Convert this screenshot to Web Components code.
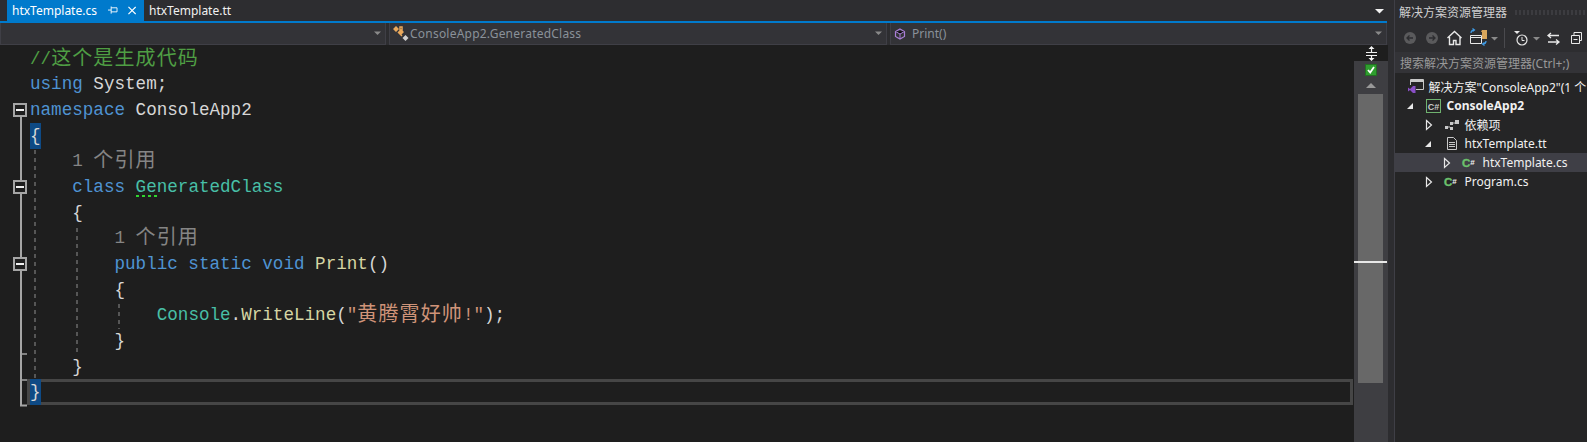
<!DOCTYPE html>
<html>
<head>
<meta charset="utf-8">
<style>
html, body { margin: 0; height: 100%; overflow: hidden; background: #2d2d30; }
body { display: flex; width: 1587px; height: 442px; font: 12px "Noto Sans", "Noto Sans CJK SC", sans-serif; }
</style>
</head>
<body>
<ide-main>
  <doc-tabs>
    <doc-tab active>htxTemplate.cs</doc-tab>
    <doc-tab>htxTemplate.tt</doc-tab>
  </doc-tabs>
  <nav-bar>
    <nav-drop></nav-drop>
    <nav-drop icon="types">ConsoleApp2.GeneratedClass</nav-drop>
    <nav-drop icon="method">Print()</nav-drop>
  </nav-bar>
  <code-editor>
    <code-line><code-tok k="com">//</code-tok><code-tok k="com" cjk>这个是生成代码</code-tok></code-line>
    <code-line><code-tok k="kw">using</code-tok> System;</code-line>
    <code-line><code-tok k="kw">namespace</code-tok> ConsoleApp2</code-line>
    <code-line><code-tok k="match">{</code-tok></code-line>
    <code-line>    <code-tok k="lens">1 </code-tok><code-tok k="lens" cjk>个引用</code-tok></code-line>
    <code-line>    <code-tok k="kw">class</code-tok> <code-tok k="type" squiggle>Ge</code-tok><code-tok k="type">neratedClass</code-tok></code-line>
    <code-line>    {</code-line>
    <code-line>        <code-tok k="lens">1 </code-tok><code-tok k="lens" cjk>个引用</code-tok></code-line>
    <code-line>        <code-tok k="kw">public static void</code-tok> <code-tok k="fn">Print</code-tok>()</code-line>
    <code-line>        {</code-line>
    <code-line>            <code-tok k="type">Console</code-tok>.<code-tok k="fn">WriteLine</code-tok>(<code-tok k="str">"</code-tok><code-tok k="str" cjk>黄腾霄好帅</code-tok><code-tok k="str">!"</code-tok>);</code-line>
    <code-line>        }</code-line>
    <code-line>    }</code-line>
    <code-line current><code-tok k="match">}</code-tok></code-line>
  </code-editor>
</ide-main>
<solution-explorer>
  <tree-row level="0" icon="solution">解决方案"ConsoleApp2"(1 个</tree-row>
  <tree-row level="1" icon="csproj" exp="open" bold>ConsoleApp2</tree-row>
  <tree-row level="2" icon="deps" exp="closed">依赖项</tree-row>
  <tree-row level="2" icon="doc" exp="open">htxTemplate.tt</tree-row>
  <tree-row level="3" icon="csfile" exp="closed" selected>htxTemplate.cs</tree-row>
  <tree-row level="2" icon="csfile" exp="closed">Program.cs</tree-row>
</solution-explorer>

<script>
const treeIcons = {
  solution: `<svg width="18" height="17" viewBox="0 0 18 17"><path d="M3.500 7V1.500h13v10H9" fill="#252526" stroke="#c8c8c8"/><path d="M3.500 3h13" stroke="#c8c8c8" stroke-width="2"/><path d="M1 9.500l2 1.500 3-3h2.500v7H6l-3-3-2 1.500z" fill="#8a4fc7"/></svg>`,
  csproj: `<svg width="16" height="14" viewBox="0 0 16 14"><rect x=".5" y=".5" width="14" height="13" fill="none" stroke="#6fb26f"/><text x="7.500" y="10.500" text-anchor="middle" font-family="Liberation Sans" font-weight="700" font-size="9" fill="#c8c8c8">C#</text></svg>`,
  deps: `<svg width="16" height="12" viewBox="0 0 16 12"><g fill="#c8c8c8"><rect x="1" y="7" width="3" height="3"/><rect x="6" y="3" width="3" height="3"/><rect x="6" y="8" width="3" height="3"/><rect x="11" y="1" width="4" height="4"/></g><path d="M4 8h2M9 4h2" stroke="#c8c8c8"/></svg>`,
  doc: `<svg width="12" height="15" viewBox="0 0 12 15"><path d="M1.500 1.500h6l3 3v9h-9z" fill="none" stroke="#c8c8c8"/><path d="M3 6.500h6M3 8.500h6M3 10.500h6" stroke="#c8c8c8"/></svg>`,
  csfile: `<svg width="18" height="12" viewBox="0 0 18 12"><text x="1" y="10" font-family="Liberation Sans" font-weight="700" font-size="11.500" fill="#6cc06c" stroke="#6cc06c" stroke-width=".4">C</text><text x="9.300" y="7.500" font-family="Liberation Sans" font-weight="700" font-size="8" fill="#f1f1f1">#</text></svg>`
};

const navIcons = {
  types: `<svg width="16" height="15" viewBox="0 0 16 15"><path d="M3 0l3 3-3 3-3-3zM8 3l3 3-3 3-3-3z" fill="#eaa95c"/><path d="M7 1h2v3H7zM5 6l4 4" stroke="#eaa95c" stroke-width="1.500"/><path d="M12.500 9l3 3-3 3-3-3z" fill="#d0d0d0"/></svg>`,
  method: `<svg width="12" height="12" viewBox="0 0 12 12"><path d="M6 1l4.500 2.500v5L6 11 1.500 8.500v-5z" fill="none" stroke="#a97fd6" stroke-width="1.200"/><path d="M1.500 3.500L6 6l4.500-2.500M6 6v5" stroke="#a97fd6"/></svg>`
};

class IdeMain extends HTMLElement {
  constructor() {
    super();
    this.attachShadow({ mode: "open" });
    this.shadowRoot.innerHTML = `<style>
      :host { display: flex; flex-direction: column; width: 1394px; height: 442px; box-sizing: border-box; background: #2d2d30; }
    </style><slot></slot>`;
  }
}

class DocTabs extends HTMLElement {
  constructor() {
    super();
    this.attachShadow({ mode: "open" });
    this.shadowRoot.innerHTML = `<style>
      :host { display: flex; height: 23px; box-sizing: border-box; padding-left: 7px; margin-right: 7px; border-bottom: 2px solid #007acc; flex: none; }
      .spacer { flex: 1; }
      svg { align-self: center; margin-right: 2px; }
    </style><slot></slot><div class="spacer"></div>
    <svg width="10" height="6" viewBox="0 0 10 6"><path d="M0 1h9L4.500 5.500z" fill="#f1f1f1"/></svg>`;
  }
}

class DocTab extends HTMLElement {
  constructor() {
    super();
    this.attachShadow({ mode: "open" });
    const controls = this.hasAttribute("active") ? `
      <svg width="11" height="9" viewBox="0 0 11 9"><path d="M3.500 0v8M0 4h3.500M3.500 1.500h6.500v4.500H3.500" fill="none" stroke="#fff"/></svg>
      <svg width="9" height="9" viewBox="0 0 9 9"><path d="M.5.500l8 8M8.500.500l-8 8" stroke="#fff" stroke-width="1.300"/></svg>` : "";
    this.shadowRoot.innerHTML = `<style>
      :host { display: flex; align-items: center; height: 21px; box-sizing: border-box; padding: 0 8px 1px 5px; color: #f1f1f1; font-size: 12px; }
      :host([active]) { background: #007acc; width: 137px; color: #fff; padding-left: 5px; }
      svg:first-of-type { margin-left: 11px; }
      svg + svg { margin-left: 10px; }
    </style><slot></slot>${controls}`;
  }
}

class NavBar extends HTMLElement {
  constructor() {
    super();
    this.attachShadow({ mode: "open" });
    this.shadowRoot.innerHTML = `<style>
      :host { display: grid; grid-template-columns: 386px 498px 1fr; column-gap: 3px; height: 22px; margin-right: 7px; flex: none; }
    </style><slot></slot>`;
  }
}

class NavDrop extends HTMLElement {
  constructor() {
    super();
    this.attachShadow({ mode: "open" });
    const icon = navIcons[this.getAttribute("icon")] || "";
    this.shadowRoot.innerHTML = `<style>
      :host { display: flex; align-items: center; box-sizing: border-box; height: 22px; background: #333337; border: 1px solid #3f3f46; border-top: 0; padding: 0 3px 0 3px; color: #8a9199; font-size: 12px; }
      :host([icon=types]) .label { padding-left: 1px; letter-spacing: .22px; }
      :host([icon=method]) .label { padding-left: 6px; }
      .label { flex: 1; white-space: nowrap; }
      svg.arrow { flex: none; }
    </style>${icon}<div class="label"><slot></slot></div>
    <svg class="arrow" width="8" height="5" viewBox="0 0 8 5"><path d="M0 .500h7L3.500 4z" fill="#8a8a8a"/></svg>`;
  }
}

class CodeEditor extends HTMLElement {
  constructor() {
    super();
    this.attachShadow({ mode: "open" });
    const lh = 25.7, top = 45.5;
    const mid = (i) => top + lh * i + lh / 2;
    const bottom = (i) => top + lh * (i + 1);
    const foldBox = (i) => {
      const y = Math.round(mid(i));
      return `<rect x="14" y="${y - 6}" width="12" height="12" fill="#1e1e1e" stroke="#a5a5a5" stroke-width="2"/><path d="M16 ${y}h8" stroke="#f0f0f0" stroke-width="2"/>`;
    };
    const tick = (y) => `<path d="M21 ${Math.round(y)}h6" stroke="#a5a5a5" stroke-width="1.500"/>`;
    this.shadowRoot.innerHTML = `<style>
      :host { display: flex; flex: 1; min-height: 0; background: #1e1e1e; margin-right: 6px; font: 17.6px "Liberation Mono", "Noto Sans CJK SC", monospace; color: #d6d6d6; }
      .code { position: relative; flex: 1; min-width: 0; padding-top: .5px; }
      .margin { position: absolute; left: 0; top: 0; pointer-events: none; }
      .bar { flex: none; width: 34px; background: #3e3e42; position: relative; display: flex; flex-direction: column; align-items: center; }
      .split { align-self: stretch; height: 16px; background: #1e1e1e; display: flex; justify-content: center; align-items: center; padding-top: 1px; box-sizing: border-box; }
      .check { margin-top: 3px; width: 12px; height: 12px; display: block; }
      .up { margin-top: 7px; display: block; }
      .thumb { margin-top: 6px; width: 25px; height: 289px; background: #686868; margin-left: -1px; }
      .caret { position: absolute; left: 0; right: 1px; top: 216px; height: 2px; background: #e8e8e8; }
    </style>
    <div class="code">
      <svg class="margin" width="130" height="397" viewBox="0 45 130 397">
        <path d="M21 ${mid(2)}V405.500h6" fill="none" stroke="#a5a5a5" stroke-width="2"/>
        ${tick(bottom(11))}${tick(bottom(12))}
        ${foldBox(2)}${foldBox(5)}${foldBox(8)}
        <g stroke="#757575" stroke-dasharray="4 4" stroke-width="1.300">
          <path d="M35 150V380"/><path d="M77 228V354"/><path d="M119 304V329"/>
        </g>
      </svg>
      <slot></slot>
    </div>
    <div class="bar">
      <div class="split"><svg width="13" height="15" viewBox="0 0 13 15"><path d="M1 6.500h11M1 9.500h11M6.500 2v4M6.500 10v4" stroke="#f1f1f1" stroke-width="1.200"/><path d="M3.500 3h6L6.500 0zM3.500 12h6l-3 3z" fill="#f1f1f1"/></svg></div>
      <svg class="check" viewBox="0 0 12 12"><rect x=".5" y=".5" width="11" height="11" fill="#2f9e2f" stroke="#226f22"/><path d="M3 6l2.200 2.500L9 3" fill="none" stroke="#fff" stroke-width="1.800"/></svg>
      <svg class="up" width="10" height="5" viewBox="0 0 10 5"><path d="M0 5h10L5 0z" fill="#999"/></svg>
      <div class="thumb"></div>
      <div class="caret"></div>
    </div>`;
  }
}

class CodeLine extends HTMLElement {
  constructor() {
    super();
    this.attachShadow({ mode: "open" });
    this.shadowRoot.innerHTML = `<style>
      :host { display: block; height: 25.7px; line-height: 27px; padding-left: 30px; position: relative; white-space: pre; }
      :host([current]) { box-sizing: border-box; margin: 0 1px 0 27px; padding-left: 0; border: 3px solid #464646; line-height: 21px; }
    </style><slot></slot>`;
  }
}

class CodeTok extends HTMLElement {
  constructor() {
    super();
    this.attachShadow({ mode: "open" });
    this.shadowRoot.innerHTML = `<style>
      :host([k=kw]) { color: #4f93d2; }
      :host([k=com]) { color: #4f9e44; }
      :host([k=type]) { color: #48bfa6; }
      :host([k=fn]) { color: #d6d6a4; }
      :host([k=str]) { color: #cf9479; }
      :host([k=lens]) { color: #858585; }
      :host([k=match]) { background: #0e4a85; box-shadow: 0 3px 0 #0e4a85, 0 -3px 0 #0e4a85; color: #d6d6d6; }
      :host([cjk]) { font-size: 20px; letter-spacing: 1.120px; line-height: 0; vertical-align: -1px; }
      :host([squiggle]) { background: linear-gradient(90deg, #2fd42f 55%, transparent 0) 0 100% / 6px 2px repeat-x; }
    </style><slot></slot>`;
  }
}

class SolutionExplorer extends HTMLElement {
  constructor() {
    super();
    this.attachShadow({ mode: "open" });
    this.shadowRoot.innerHTML = `<style>
      :host { display: flex; flex-direction: column; flex: 1; min-width: 0; background: #252526; border-left: 1px solid #3f3f46; color: #f1f1f1; overflow: hidden; }
      .title { display: flex; align-items: center; height: 24px; flex: none; background: #2d2d30; padding-left: 4px; color: #d0d0d0; white-space: nowrap; }
      .grip { flex: 1; height: 5px; margin: 0 2px 0 8px; background: radial-gradient(circle at 1px 1px, #3c3c40 1px, transparent 1px) 0 0 / 4px 2px; }
      .tools { display: flex; align-items: center; height: 28px; flex: none; background: #2d2d30; }
      .tools svg { display: block; }
      .search { display: flex; align-items: center; height: 21px; flex: none; background: #333337; color: #999; padding-left: 5px; white-space: nowrap; }
      .tree { padding-top: 4px; display: flex; flex-direction: column; }
    </style>
    <div class="title">解决方案资源管理器<div class="grip"></div></div>
    <div class="tools">
      <svg width="192" height="28" viewBox="1395 24 192 28">
        <circle cx="1410" cy="38" r="6" fill="#5a5a5c"/><path d="M1413 38h-6M1409.500 35.500L1407 38l2.500 2.500" fill="none" stroke="#2d2d30" stroke-width="1.300"/>
        <circle cx="1432" cy="38" r="6" fill="#5a5a5c"/><path d="M1429 38h6M1432.500 35.500L1435 38l-2.500 2.500" fill="none" stroke="#2d2d30" stroke-width="1.300"/>
        <path d="M1447.500 38l7-6.500 7 6.500M1449.500 37v7.500h4v-4h2.500v4h4V37" fill="none" stroke="#e8e8e8" stroke-width="1.400"/>
        <path d="M1477 32h4l1-2h5v9h-5v-7" fill="#d9a65c"/><path d="M1470.500 35.500h11v8h-11zM1470.500 37.500h11" fill="#2d2d30" stroke="#e8e8e8"/>
        <path d="M1471 33c0-2 1-3 3-3M1472.500 28.500l2 1.500-2 1.500M1486 41c0 2-1 3-3 3M1484.500 45.500l-2-1.500 2-1.500" fill="none" stroke="#3f9ce8" stroke-width="1.200"/>
        <path d="M1491 37h7l-3.500 3.500z" fill="#8a8a8a"/>
        <path d="M1504.500 28v20" stroke="#4a4a4e"/>
        <path d="M1514 31h6l-3 3z" fill="#e8e8e8"/><circle cx="1522" cy="40" r="5" fill="none" stroke="#e8e8e8" stroke-width="1.200"/><path d="M1522 37v3.500h2.500" fill="none" stroke="#e8e8e8"/>
        <path d="M1533 37h7l-3.500 3.500z" fill="#8a8a8a"/>
        <path d="M1548 35.500h11M1551 33l-3 2.500 3 2.500M1559 42h-11M1556 39.500l3 2.500-3 2.500" fill="none" stroke="#e8e8e8" stroke-width="1.300"/>
        <path d="M1571.500 35.500h8v8h-8zM1574 35v-2.500h7.500v8H1580M1573.500 39.500h4" fill="none" stroke="#e8e8e8"/>
      </svg>
    </div>
    <div class="search">搜索解决方案资源管理器(Ctrl+;)</div>
    <div class="tree"><slot></slot></div>`;
  }
}

class TreeRow extends HTMLElement {
  constructor() {
    super();
    this.attachShadow({ mode: "open" });
    const exp = this.getAttribute("exp");
    const arrow = exp === "open"
      ? `<svg width="16" height="10" viewBox="0 0 16 10"><path d="M11 2v6H5z" fill="#e8e8e8"/></svg>`
      : exp === "closed"
        ? `<svg width="16" height="12" viewBox="0 0 16 12"><path d="M6.500 1.500l5 4.500-5 4.500z" fill="none" stroke="#e8e8e8" stroke-width="1.200"/></svg>`
        : "";
    this.shadowRoot.innerHTML = `<style>
      :host { display: flex; align-items: center; height: 19px; flex: none; white-space: nowrap; --level: ${this.getAttribute("level")}; color: #f1f1f1; }
      :host([selected]) { background: #3f3f46; }
      :host([bold]) { font-weight: 700; }
      .exp { flex: none; width: 16px; height: 19px; display: flex; align-items: center; margin-left: calc(var(--level) * 18px - 11.5px); }
      .icon { flex: none; width: 20px; height: 19px; margin-left: 6px; margin-right: 3px; display: flex; align-items: center; justify-content: center; }
    </style><div class="exp">${arrow}</div><div class="icon">${treeIcons[this.getAttribute("icon")]}</div><slot></slot>`;
  }
}

customElements.define("ide-main", IdeMain);
customElements.define("doc-tabs", DocTabs);
customElements.define("doc-tab", DocTab);
customElements.define("nav-bar", NavBar);
customElements.define("nav-drop", NavDrop);
customElements.define("code-editor", CodeEditor);
customElements.define("code-line", CodeLine);
customElements.define("code-tok", CodeTok);
customElements.define("solution-explorer", SolutionExplorer);
customElements.define("tree-row", TreeRow);
</script>
</body>
</html>
